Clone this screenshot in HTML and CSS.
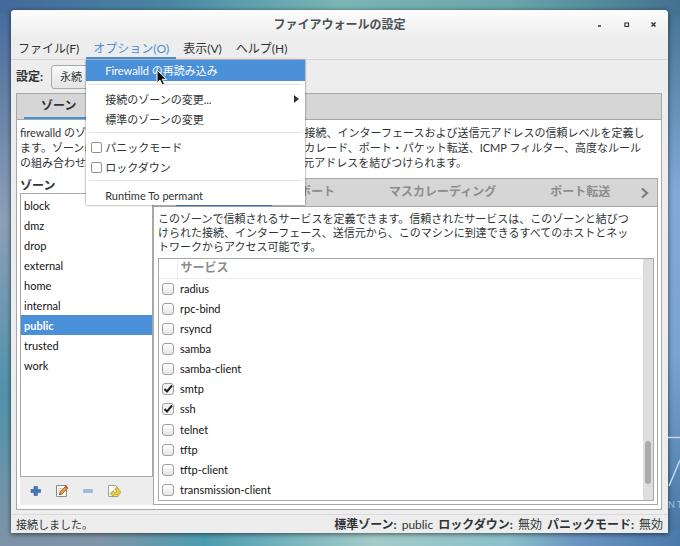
FILE: index.html
```html
<!DOCTYPE html>
<html lang="ja">
<head>
    <meta charset="UTF-8">
    <meta name="viewport" content="width=device-width, initial-scale=1.0">
    <title>ファイアウォールの設定</title>
    <link rel="stylesheet" href="styles.css">
</head>
<body>
    <div class="wallpaper-art">
        <svg width="12" height="90" viewBox="0 0 12 90">
            <path d="M0 7.500H12M1 56L12 30" stroke="#c3d6ea" stroke-width="1.500" fill="none" />
            <text x="0" y="78" class="art-text">N T</text>
        </svg>
    </div>

    <div class="window">
        <header class="titlebar">
            <h1>ファイアウォールの設定</h1>
            <div class="window-buttons">
                <button aria-label="最小化"><svg width="7" height="7"><path d="M2 5H5" stroke="#2e3436" stroke-width="1.500" /></svg></button>
                <button aria-label="最大化"><svg width="7" height="7"><path d="M2 2H5.500V5.500H2Z" stroke="#2e3436" stroke-width="1.200" fill="none" /></svg></button>
                <button aria-label="閉じる"><svg width="7" height="7"><path d="M1.500 1.500L5.500 5.500M5.500 1.500L1.500 5.500" stroke="#2e3436" stroke-width="1.500" /></svg></button>
            </div>
        </header>

        <nav class="menubar">
            <button class="menu-item">ファイル(F)</button>
            <div class="menu-holder">
                <button class="menu-item open">オプション(O)</button>
                <div class="menu">
                    <button class="menu-row selected">Firewalld の再読み込み</button>
                    <hr>
                    <button class="menu-row">接続のゾーンの変更...
                        <svg class="submenu-arrow" width="5" height="8"><path d="M0 0L5 4L0 8Z" fill="#2e3436" /></svg>
                    </button>
                    <button class="menu-row">標準のゾーンの変更</button>
                    <hr>
                    <label class="menu-row"><input type="checkbox" class="menu-check">パニックモード</label>
                    <label class="menu-row"><input type="checkbox" class="menu-check">ロックダウン</label>
                    <hr>
                    <button class="menu-row">Runtime To permant</button>
                    <svg class="cursor" width="12" height="18" viewBox="0 0 12 18"><path d="M1 1V14L4 11.200L6.200 16L8.500 15L6.300 10.300H10.500Z" fill="#111" stroke="#fff" stroke-width="1" /></svg>
                </div>
            </div>
            <button class="menu-item">表示(V)</button>
            <button class="menu-item">ヘルプ(H)</button>
        </nav>

        <div class="toolbar">
            <label for="config">設定:</label>
            <select id="config">
                <option>永続</option>
                <option>実行時</option>
            </select>
        </div>

        <main class="notebook">
            <div class="tabs">
                <button class="tab active">ゾーン</button>
            </div>
            <div class="page">
                <p class="zone-description">firewalld のゾーンは、ゾーンに所属しているネットワーク接続、インターフェースおよび送信元アドレスの信頼レベルを定義し<br>ます。ゾーンは各種サービスやポート、プロトコル、マスカレード、ポート・パケット転送、ICMP フィルター、高度なルール<br>の組み合わせです。ゾーンはインターフェースおよび送信元アドレスを結びつけられます。</p>

                <div class="columns">
                    <section class="zones">
                        <h2>ゾーン</h2>
                        <ul class="zone-list">
                            <li>block</li>
                            <li>dmz</li>
                            <li>drop</li>
                            <li>external</li>
                            <li>home</li>
                            <li>internal</li>
                            <li class="current">public</li>
                            <li>trusted</li>
                            <li>work</li>
                        </ul>
                        <div class="zone-actions">
                            <button aria-label="追加"><svg width="14" height="14"><path d="M5 2.500H8.500V5.500H11.500V8.500H8.500V11.500H5V8.500H2V5.500H5Z" fill="#3f78bd" stroke="#2d5f9f" stroke-width=".6" /></svg></button>
                            <button aria-label="編集"><svg width="14" height="14"><path d="M1.500 1.500H11.500V12.500H1.500Z" fill="#fafafa" stroke="#8b8d88" /><path d="M3.500 4.500H8M3.500 6.500H7" stroke="#c9c9c9" /><path d="M4.500 10.500L5 8L10.500 2.500L12.500 4.500L7 10Z" fill="#ef9b3a" stroke="#a5591a" stroke-width=".8" /><path d="M10 3L11.200 1.800L13 3.600L12 5Z" fill="#d63a35" /><path d="M4.300 10.700L4.800 9L6 10.200Z" fill="#333" /></svg></button>
                            <button aria-label="削除"><svg width="14" height="14"><path d="M2.500 5.500H11.500V8.500H2.500Z" fill="#9dbbdf" stroke="#88a9d2" stroke-width=".6" /></svg></button>
                            <button aria-label="初期値の読み込み"><svg width="14" height="14"><path d="M1.500 1.500H8.500L11 4V12.500H1.500Z" fill="#fafafa" stroke="#9a9c98" /><path d="M3 9.500L6.500 6.500V8.300H9.500V6L8 6V4.800L10 3.500L13.300 7V9.500L11.500 11H6.500V12.500Z" fill="#e7cf3e" stroke="#b09a22" stroke-width=".7" /></svg></button>
                        </div>
                    </section>

                    <section class="notebook inner">
                        <div class="tabs">
                            <button class="tab active">サービス</button>
                            <button class="tab">ポート</button>
                            <button class="tab">マスカレーディング</button>
                            <button class="tab">ポート転送</button>
                            <button class="next-tab" aria-label="次へ"><svg width="9" height="12"><path d="M2 1.500L7 6L2 10.500" fill="none" stroke="#7b7d7d" stroke-width="2.200" /></svg></button>
                        </div>
                        <div class="service-page">
                            <p>このゾーンで信頼されるサービスを定義できます。信頼されたサービスは、このゾーンと結びつ<br>けられた接続、インターフェース、送信元から、このマシンに到達できるすべてのホストとネッ<br>トワークからアクセス可能です。</p>
                            <div class="service-box">
                                <table class="services">
                                    <thead>
                                        <tr><th class="check-cell"></th><th>サービス</th></tr>
                                    </thead>
                                    <tbody>
                                        <tr><td><input type="checkbox" id="radius"></td><td><label for="radius">radius</label></td></tr>
                                        <tr><td><input type="checkbox" id="rpc-bind"></td><td><label for="rpc-bind">rpc-bind</label></td></tr>
                                        <tr><td><input type="checkbox" id="rsyncd"></td><td><label for="rsyncd">rsyncd</label></td></tr>
                                        <tr><td><input type="checkbox" id="samba"></td><td><label for="samba">samba</label></td></tr>
                                        <tr><td><input type="checkbox" id="samba-client"></td><td><label for="samba-client">samba-client</label></td></tr>
                                        <tr><td><input type="checkbox" id="smtp" checked></td><td><label for="smtp">smtp</label></td></tr>
                                        <tr><td><input type="checkbox" id="ssh" checked></td><td><label for="ssh">ssh</label></td></tr>
                                        <tr><td><input type="checkbox" id="telnet"></td><td><label for="telnet">telnet</label></td></tr>
                                        <tr><td><input type="checkbox" id="tftp"></td><td><label for="tftp">tftp</label></td></tr>
                                        <tr><td><input type="checkbox" id="tftp-client"></td><td><label for="tftp-client">tftp-client</label></td></tr>
                                        <tr><td><input type="checkbox" id="transmission-client"></td><td><label for="transmission-client">transmission-client</label></td></tr>
                                    </tbody>
                                </table>
                                <div class="scrollbar"><div class="thumb"></div></div>
                            </div>
                        </div>
                    </section>
                </div>
            </div>
        </main>

        <footer class="statusbar">
            <span>接続しました。</span>
            <div class="status-right">
                <b>標準ゾーン:</b>
                <span>public</span>
                <b>ロックダウン:</b>
                <span>無効</span>
                <b>パニックモード:</b>
                <span>無効</span>
            </div>
        </footer>
    </div>
</body>
</html>
```

FILE: styles.css
```css
* {
    box-sizing: border-box;
}

body {
    margin: 0;
    height: 100vh;
    padding: 10px 12px 13px 11px;
    font-family: Lato, "Noto Sans CJK JP", sans-serif;
    font-size: 11px;
    line-height: 15px;
    color: #2e3436;
    background:
        linear-gradient(to right, #7d92a8, #8095a8 15%, #4c9cb0 30%, #a3cbc8 55%, #8abfca 75%, #6b93c0 85%, #4a7aab) bottom / 100% 16px no-repeat,
        linear-gradient(to right, #43699a, #4a86a2 25%, #5b9dac 35%, #7ab6b4 50%, #6aa5ab 75%, #42718e) top / 100% 14px no-repeat,
        linear-gradient(to bottom, #43699a, #8d9fb8 40%, #4f93ab 72%, #8095a8) left / 50% 100% no-repeat,
        linear-gradient(to bottom, #42718e, #83a9d8 35%, #7ba3cf 65%, #4474a2) right / 50% 100% no-repeat;
}

button, select, input {
    font: inherit;
    color: inherit;
    margin: 0;
}

button {
    padding: 0;
    border: none;
    background: none;
}

svg {
    display: block;
}

.wallpaper-art {
    position: absolute;
    right: 0;
    bottom: 26px;
}

.art-text {
    font-size: 9px;
    fill: #a9c4de;
}

/* window */
.window {
    height: 100%;
    display: flex;
    flex-direction: column;
    background: #ededed;
    border-radius: 4px 4px 0 0;
    box-shadow: 0 1px 5px rgba(0, 0, 0, 0.6);
}

.titlebar {
    display: grid;
    grid-template-columns: 1fr auto 1fr;
    align-items: center;
    height: 28px;
    border-radius: 4px 4px 0 0;
    background: linear-gradient(#fdfdfd, #ededed);
}

.titlebar h1 {
    grid-column: 2;
    margin: 0;
    font-size: 12px;
    font-weight: bold;
    color: #4a5055;
}

.window-buttons {
    display: flex;
    justify-content: flex-end;
    gap: 20px;
    padding-right: 11px;
}

/* menus */
.menubar {
    display: flex;
    height: 22px;
    border-bottom: 1px solid #d6d6d6;
}

.menu-holder {
    position: relative;
    display: flex;
}

.menu-item {
    padding: 2px 7px 0;
    font-size: 12px;
    border-bottom: 2px solid transparent;
}

.menu-item.open {
    color: #4a90d9;
    border-color: #4a90d9;
}

.menu {
    position: absolute;
    top: 100%;
    left: 0;
    z-index: 1;
    width: 219px;
    margin-top: 1px;
    background: #fff;
    box-shadow: 0 0 2px rgba(0, 0, 0, 0.6);
}

.menu-row {
    display: flex;
    align-items: center;
    width: 100%;
    height: 20px;
    padding-left: 19px;
    text-align: left;
}

.menu-row.selected {
    height: 21px;
    background: #4a90d9;
    color: #fff;
}

.menu hr {
    margin: 3px 3px 4px;
    border: none;
    border-top: 1px solid #e2e2e2;
}

.submenu-arrow {
    margin-left: auto;
    margin-right: 6px;
}

.menu-check {
    appearance: none;
    width: 11px;
    height: 11px;
    margin: 0 3px 0 -14px;
    border: 1px solid #8f8f8f;
    border-radius: 2px;
}

.cursor {
    position: absolute;
    left: 70px;
    top: 9px;
}

.toolbar {
    display: flex;
    align-items: center;
    gap: 8px;
    height: 33px;
    padding: 0 5px;
}

.toolbar label {
    font-size: 12px;
    font-weight: bold;
}

.toolbar select {
    height: 24px;
    width: 76px;
    padding-left: 4px;
    border: 1px solid #a8a8a8;
    border-radius: 3px;
    background: linear-gradient(#fafafa, #e4e4e4);
}

/* notebooks */
.notebook {
    flex: 1;
    display: flex;
    flex-direction: column;
    min-width: 0;
    min-height: 0;
    margin: 0 6px 4px 5px;
    border: 1px solid #a8a8a8;
    background: #fff;
}

.tabs {
    display: flex;
    height: 26px;
    padding-left: 7px;
    border-bottom: 1px solid #a8a8a8;
    background: #d6d6d6;
}

.tab {
    padding: 0 17px;
    font-size: 12px;
    font-weight: bold;
    color: #8b8d8d;
    border-bottom: 2px solid transparent;
}

.tab.active {
    color: #2e3436;
    border-color: #4a90d9;
}

.page {
    flex: 1;
    display: flex;
    flex-direction: column;
    min-height: 0;
    padding: 5px 3px 4px;
}

p {
    margin: 0;
    white-space: nowrap;
}

.columns {
    flex: 1;
    display: flex;
    min-height: 0;
    margin-top: 8px;
}

.zones {
    display: flex;
    flex-direction: column;
    width: 133px;
}

.zones h2 {
    margin: 0;
    font-size: 12px;
    line-height: 15px;
}

.zone-list {
    flex: 1;
    display: grid;
    grid-template-rows: repeat(14, 1fr);
    margin: 0;
    padding: 1px 0 0;
    list-style: none;
    border: 1px solid #a8a8a8;
    color: #111;
}

.zone-list li {
    display: flex;
    align-items: center;
    padding-left: 3px;
}

.zone-list .current {
    background: #4a90d9;
    color: #fff;
    font-weight: bold;
}

.zone-actions {
    display: flex;
    align-items: center;
    gap: 12px;
    height: 28px;
    padding-left: 9px;
    background: #ededed;
}

.inner {
    margin: 0;
}

.inner .tabs {
    height: 28px;
    padding-left: 22px;
}

.inner .tab {
    padding: 0 27px;
}

.inner .tab.active {
    padding: 0 24px;
}

.next-tab {
    margin-left: auto;
    padding-right: 8px;
}

.service-page {
    flex: 1;
    display: flex;
    flex-direction: column;
    gap: 4px;
    min-height: 0;
    padding: 5px 3px 3px 4px;
    line-height: 14px;
}

.service-box {
    flex: 1;
    display: grid;
    grid-template-columns: 1fr 10px;
    min-height: 0;
    border: 1px solid #a8a8a8;
}

.services {
    border-collapse: collapse;
    height: 100%;
    color: #111;
}

.services td, .services th {
    padding: 0 3px;
    text-align: left;
}

.services th {
    height: 19px;
    font-size: 12px;
    color: #8b8d8d;
    border-bottom: 1px solid #ededed;
}

.services .check-cell {
    width: 18px;
    border-right: 1px solid #ededed;
}

.services input {
    appearance: none;
    display: block;
    width: 12px;
    height: 12px;
    border: 1px solid #a0a0a0;
    border-radius: 3px;
    background: linear-gradient(#fff, #e4e4e4);
}

.services input:checked {
    background: url("data:image/svg+xml,%3Csvg xmlns='http://www.w3.org/2000/svg' viewBox='0 0 10 10'%3E%3Cpath d='M1.500 5L4 7.500L9 1.500' fill='none' stroke='%23222' stroke-width='2'/%3E%3C/svg%3E") center no-repeat, #f4f4f4;
}

.scrollbar {
    display: flex;
    flex-direction: column;
    justify-content: flex-end;
    padding: 0 2px 16px;
    background: #dedede;
}

.thumb {
    height: 19%;
    border-radius: 3px;
    background: #a9abab;
}

/* status bar */
.statusbar {
    display: flex;
    justify-content: space-between;
    align-items: center;
    height: 19px;
    padding: 0 5px;
    border-top: 1px solid #dadada;
}

.status-right {
    display: flex;
    gap: 5px;
    font-size: 12px;
}
```
